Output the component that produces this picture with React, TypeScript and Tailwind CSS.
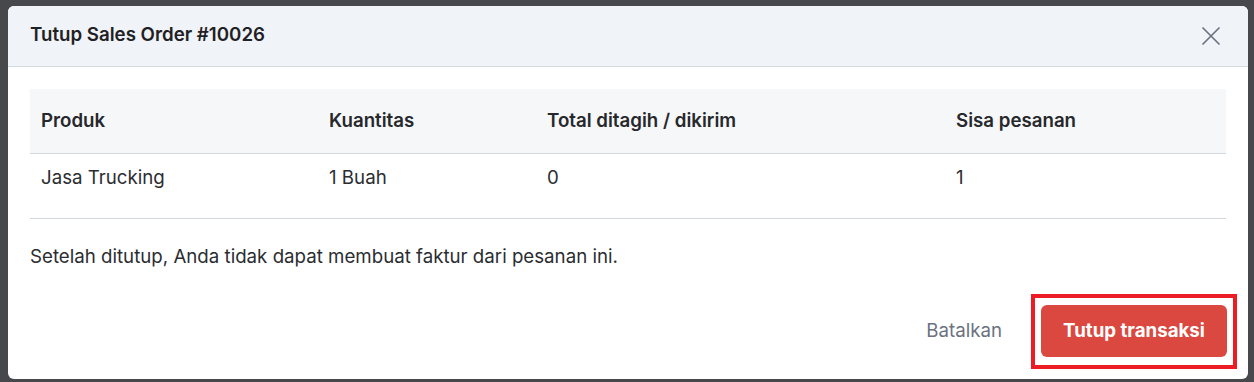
const columns = [
  { label: "Produk", width: "w-[288px]" },
  { label: "Kuantitas", width: "w-[218px]" },
  { label: "Total ditagih / dikirim", width: "w-[409px]" },
  { label: "Sisa pesanan", width: "" },
]

const rows = [["Jasa Trucking", "1 Buah", "0", "1"]]

export default function App() {
  return (
    <div className="h-[382px] w-full overflow-hidden bg-[#46484c] px-[8px] pt-[6px] font-['Inter',sans-serif] text-[#2b2d31]">
      <div className="flex h-[373px] w-[1240px] flex-col overflow-hidden rounded-[6px] bg-white">
        <div className="flex h-[61px] shrink-0 items-center justify-between border-b border-[#d3dae4] bg-[#f0f3f8] pl-[22px] pr-[28px]">
          <h2 className="pb-[1px] text-[18.7px] font-semibold text-[#1f2124]">Tutup Sales Order #10026</h2>
          <button className="text-[#6b7280]">
            <svg width="18" height="18" viewBox="0 0 18 18" fill="none" stroke="currentColor" strokeWidth="1.7" strokeLinecap="round">
              <path d="M1 1L17 17M17 1L1 17" />
            </svg>
          </button>
        </div>

        <div className="flex flex-1 flex-col px-[22px] pt-[22px]">
          <table className="w-full border-collapse text-left text-[18.7px]">
            <thead>
              <tr className="h-[64px] border-b border-[#d3d8df] bg-[#f6f7f9]">
                {columns.map((c) => (
                  <th key={c.label} className={`${c.width} px-[11px] font-semibold text-[#26282c]`}>
                    {c.label}
                  </th>
                ))}
              </tr>
            </thead>
            <tbody>
              {rows.map((r, i) => (
                <tr key={i} className="h-[65px] border-b border-[#d3d8df]">
                  {r.map((v, j) => (
                    <td key={j} className="px-[11px] pt-[10px] align-top font-normal text-[#2b2d31]">
                      {v}
                    </td>
                  ))}
                </tr>
              ))}
            </tbody>
          </table>

          <p className="mt-[24px] text-[18.7px] text-[#2b2d31]">
            Setelah ditutup, Anda tidak dapat membuat faktur dari pesanan ini.
          </p>

          <div className="-mr-[11px] mt-[23px] flex items-center justify-end gap-[29px]">
            <button className="text-[18.7px] text-[#6b7280]">Batalkan</button>
            <div className="border-4 border-[#ed1c24] px-[6px] pb-[8px] pt-[7px]">
              <button className="h-[52px] w-[186px] rounded-[6px] bg-[#da4840] text-[18.7px] font-bold text-white">
                Tutup transaksi
              </button>
            </div>
          </div>
        </div>
      </div>
    </div>
  )
}
